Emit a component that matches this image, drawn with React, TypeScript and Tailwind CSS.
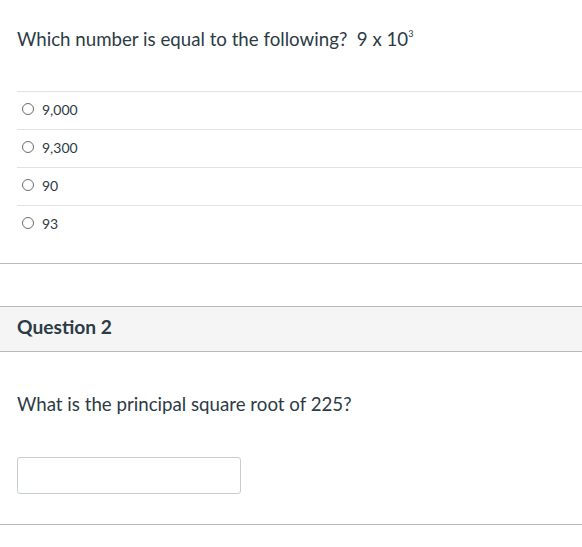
import React from 'react';

const answers = ['9,000', '9,300', '90', '93'];

function Radio(): React.ReactElement {
  return <span className="inline-block w-[12px] h-[12px] rounded-full border border-[#6b6b6b] bg-white shrink-0" />;
}

export default function App(): React.ReactElement {
  return (
    <div className="w-[582px] h-[547px] overflow-hidden bg-white text-[#2d3b45] font-['Lato','Noto_Sans',sans-serif]">
      {/* Question 1 body */}
      <div className="border-b border-[#b9b9b9] pb-5">
        <p className="pt-[26px] px-[17px] text-[18.7px] leading-[27px] mb-[38px]">
          Which number is equal to the following?&nbsp; 9 x 10
          <sup className="text-[9px] -top-[0.95em]">3</sup>
        </p>
        <div className="ml-[17px]">
          {answers.map((a) => (
            <div key={a} className="flex items-center gap-[8px] h-[38px] border-t border-[#e2e2e2] pl-[5px] pb-[3px] text-[14px]">
              <Radio />
              <span>{a}</span>
            </div>
          ))}
        </div>
      </div>

      {/* Question 2 */}
      <div className="mt-[42px] border-y border-[#b9b9b9] bg-[#f5f5f5] h-[46px] flex items-center px-[17px] pb-[4px]">
        <h3 className="text-[19.2px] font-bold">Question 2</h3>
      </div>
      <div className="border-b border-[#b9b9b9] pb-[30px]">
        <p className="pt-[39px] px-[17px] text-[18.7px] leading-[27px] mb-[39px]">
          What is the principal square root of 225?
        </p>
        <input
          type="text"
          className="ml-[17px] block w-[224px] h-[37px] border border-[#c7cdd1] rounded-[3px] bg-white outline-none"
        />
      </div>
    </div>
  );
}
